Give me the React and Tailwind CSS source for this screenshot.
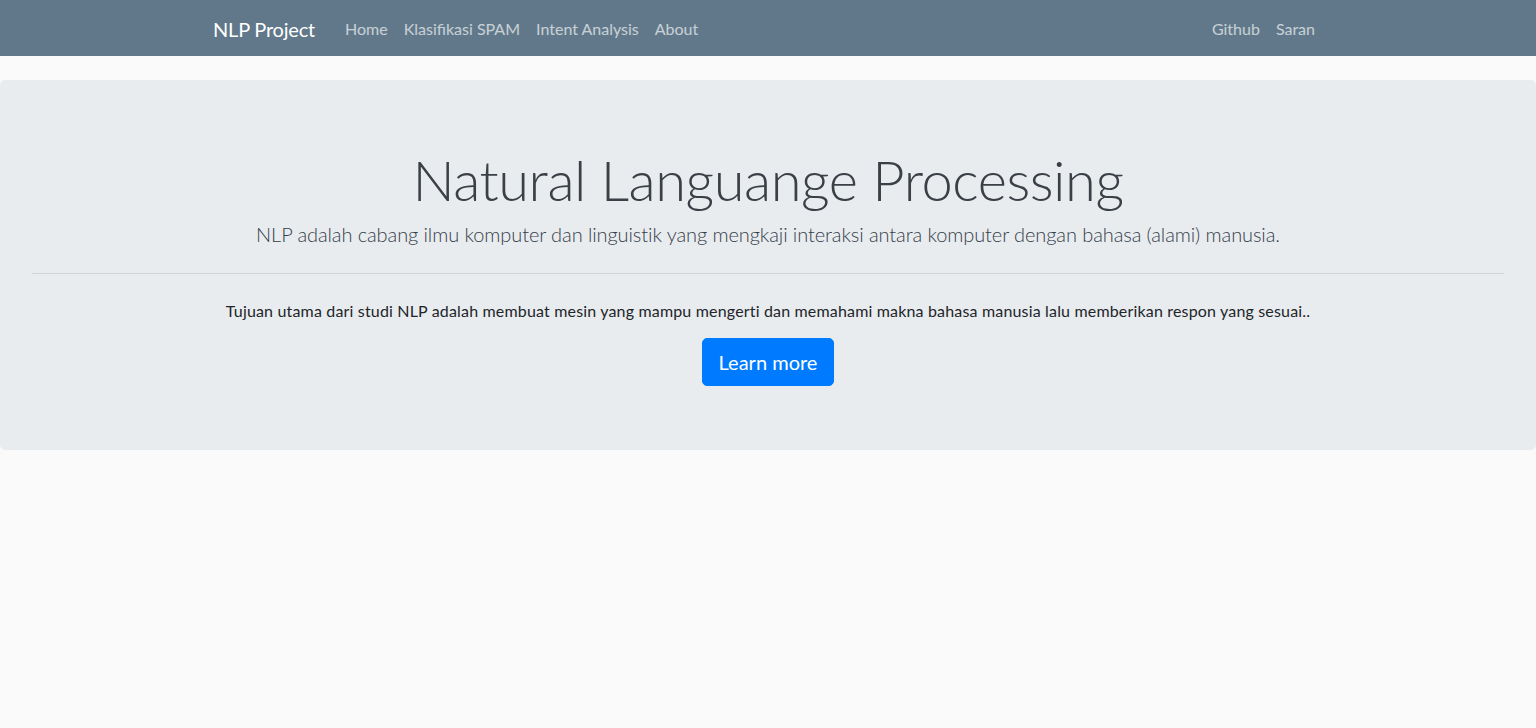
import React from 'react';

const NAV_LEFT = ['Home', 'Klasifikasi SPAM', 'Intent Analysis', 'About'];
const NAV_RIGHT = ['Github', 'Saran'];

const FONT = { fontFamily: '"Segoe UI", Lato, "Noto Sans", sans-serif' };

const Navbar = () => (
  <nav className="bg-[#607889] h-14">
    <div className="w-[1140px] mx-auto px-[15px] h-full flex items-center pt-[2px]">
      <a className="text-white text-[20px] leading-[30px] mr-[22px] py-[5px] tracking-[-0.2px]">NLP Project</a>
      <ul className="flex items-center">
        {NAV_LEFT.map(item => (
          <li key={item}>
            <a className="block px-2 py-2 text-[16px] leading-6 text-white/65">{item}</a>
          </li>
        ))}
      </ul>
      <ul className="flex items-center ml-auto">
        {NAV_RIGHT.map(item => (
          <li key={item}>
            <a className="block px-2 py-2 text-[16px] leading-6 text-white/65">{item}</a>
          </li>
        ))}
      </ul>
    </div>
  </nav>
);

export default function App() {
  return (
    <div className="min-h-[728px] bg-[#fafafa] text-[#212529]" style={FONT}>
      <Navbar />
      <div className="mt-6 bg-[#e9ecef] rounded-[5px] px-8 py-16 text-center">
        <h1 className="text-[56px] leading-[1.2] font-light text-[#3b4047] pt-[2px] mb-[6px] tracking-[-0.45px]">
          Natural Languange Processing
        </h1>
        <p className="text-[20px] leading-[30px] font-light text-[#34404a] tracking-[-0.09px]">
          NLP adalah cabang ilmu komputer dan linguistik yang mengkaji interaksi antara komputer dengan bahasa (alami) manusia.
        </p>
        <hr className="my-6 border-0 border-t border-black/10" />
        <p className="text-[16px] leading-6 pt-px mb-[15px] tracking-[0.17px]">
          Tujuan utama dari studi NLP adalah membuat mesin yang mampu mengerti dan memahami makna bahasa manusia lalu memberikan respon yang sesuai..
        </p>
        <a className="inline-block align-top bg-[#007bff] text-white text-[20px] leading-[30px] px-4 py-2 border border-[#007bff] rounded-[5px]">
          Learn more
        </a>
      </div>
    </div>
  );
}
